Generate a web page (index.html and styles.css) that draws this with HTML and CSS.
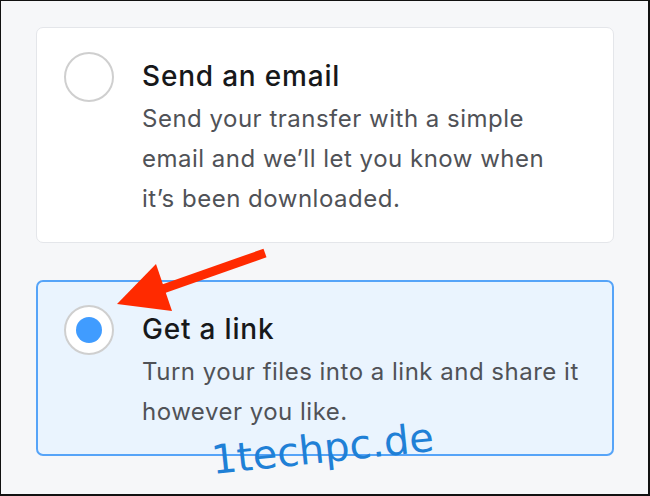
FILE: index.html
```html
<!DOCTYPE html>
<html lang="en">

<head>
  <meta charset="UTF-8" />
  <meta name="viewport" content="width=device-width, initial-scale=1" />
  <title>Transfer options</title>
  <link rel="stylesheet" href="styles.css">
</head>

<body>

  <div class="frame">
    <div class="options">

      <label class="option">
        <span class="radio"></span>
        <span class="text">
          <span class="title">Send an email</span>
          <span class="desc">Send your transfer with a simple email and we’ll let you know when it’s been downloaded.</span>
        </span>
      </label>

      <label class="option selected">
        <span class="radio"><span class="dot"></span></span>
        <span class="text">
          <span class="title">Get a link</span>
          <span class="desc">Turn your files into a link and share it however you like.</span>
        </span>
      </label>

    </div>

    <!-- red pointer arrow -->
    <svg class="arrow" width="650" height="496" viewBox="0 0 650 496">
      <line x1="265" y1="253" x2="160" y2="290" stroke="#ff2a00" stroke-width="9" />
      <polygon points="117,304 156,264 172,311" fill="#ff2a00" />
    </svg>

    <div class="watermark">1techpc.de</div>
  </div>

</body>

</html>
```

FILE: styles.css
```css
* {
  margin: 0;
  padding: 0;
  box-sizing: border-box;
}

body {
  width: 650px;
  height: 496px;
  overflow: hidden;
  font-family: Inter, "Noto Sans", sans-serif;
}

.frame {
  position: relative;
  width: 650px;
  height: 496px;
  background-color: #f6f7f9;
  border: 1px solid #111;
  border-right-width: 2px;
  border-bottom-width: 2px;
  padding: 26px 34px 0 35px;
}

.options {
  display: flex;
  flex-direction: column;
  gap: 37px;
}

.option {
  display: flex;
  align-items: flex-start;
  gap: 28px;
  background-color: #fff;
  border: 1px solid #e4e6ea;
  border-radius: 7px;
  padding: 24px 16px 23px 27px;
}

.option.selected {
  background-color: #eaf4fe;
  border: 2px solid #56a4f8;
  padding: 23px 15px 22px 26px;
}

.radio {
  flex: none;
  width: 50px;
  height: 50px;
  border: 2px solid #cfcfcf;
  border-radius: 50%;
  background-color: #fff;
  display: flex;
  align-items: center;
  justify-content: center;
}

.dot {
  width: 26px;
  height: 26px;
  border-radius: 50%;
  background-color: #409cff;
}

.text {
  display: flex;
  flex-direction: column;
  max-width: 440px;
}

.title {
  font-size: 28px;
  font-weight: 500;
  line-height: 48px;
  letter-spacing: 0.8px;
  color: #17181a;
}

.desc {
  font-size: 24px;
  line-height: 40px;
  letter-spacing: 0.5px;
  color: #505257;
  margin-top: -1px;
}

.arrow {
  position: absolute;
  left: -1px;
  top: -1px;
}

.watermark {
  position: absolute;
  left: 213px;
  top: 436px;
  font-family: "DejaVu Sans", sans-serif;
  font-size: 40px;
  color: #1f80d6;
  transform: rotate(-6deg);
  transform-origin: left bottom;
}
```
